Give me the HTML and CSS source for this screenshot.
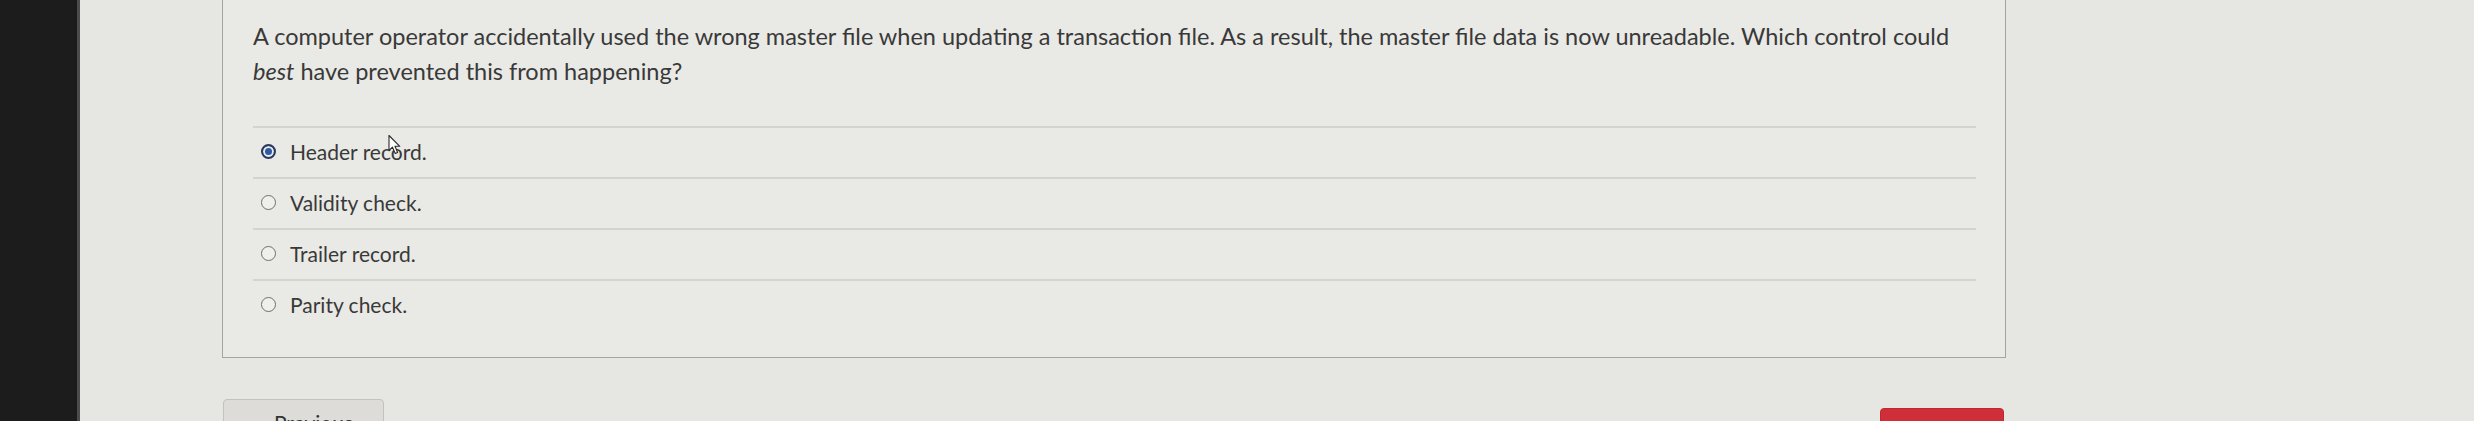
FILE: index.html
```html
<!DOCTYPE html>
<html lang="en">
<head>
  <meta charset="UTF-8">
  <meta name="viewport" content="width=device-width, initial-scale=1.0">
  <title>Quiz Question</title>
  <link rel="stylesheet" href="styles.css">
</head>
<body>

  <div class="screen">
    <aside class="bezel"></aside>

    <main class="content">
      <section class="question-card">
        <p class="question-text">A computer operator accidentally used the wrong master file when updating a transaction file. As a result, the master file data is now unreadable. Which control could <em>best</em> have prevented this from happening?</p>

        <ul class="answers">
          <li class="answer">
            <span class="radio checked"></span>
            <span class="answer-label">Header record.
              <svg class="cursor" viewBox="0 0 13 21" width="13" height="24">
                <path d="M1 1 L1 16 L4.5 12.6 L7.2 19 L9.6 18 L7 11.8 L11.8 11.8 Z" fill="#ffffff" stroke="#2a2a2a" stroke-width="1.1" stroke-linejoin="round"/>
              </svg>
            </span>
          </li>
          <li class="answer">
            <span class="radio"></span>
            <span class="answer-label">Validity check.</span>
          </li>
          <li class="answer">
            <span class="radio"></span>
            <span class="answer-label">Trailer record.</span>
          </li>
          <li class="answer">
            <span class="radio"></span>
            <span class="answer-label">Parity check.</span>
          </li>
        </ul>
      </section>

      <div class="quiz-nav">
        <button class="btn btn-prev">Previous</button>
        <button class="btn btn-next">Next</button>
      </div>
    </main>
  </div>

</body>
</html>
```

FILE: styles.css
```css
/* General Reset */
body, html {
  margin: 0;
  padding: 0;
  height: 100%;
  overflow: hidden;
  font-family: Lato, "Open Sans", sans-serif;
  background-color: #e6e6e2;
}

ul {
  list-style-type: none;
  margin: 0;
  padding: 0;
}

.screen {
  display: flex;
  height: 421px;
}

/* Dark monitor edge on the left */
.bezel {
  width: 77px;
  flex-shrink: 0;
  background-color: #1c1c1c;
  border-right: 3px solid #4b4b4b;
}

/* Main Content */
.content {
  flex: 1;
  padding-left: 142px;
}

.question-card {
  width: 1784px;
  box-sizing: border-box;
  background-color: #e9e9e5;
  border: 1px solid #a4a4a0;
  border-top: none;
  padding: 19px 29px 27px 30px;
}

.question-text {
  margin: 0;
  font-size: 23.5px;
  line-height: 35px;
  color: #393939;
}

.answers {
  margin-top: 37px;
}

.answer {
  height: 51px;
  box-sizing: border-box;
  border-top: 2px solid #d3d3cf;
  padding-left: 8px;
  padding-bottom: 3px;
  display: flex;
  align-items: center;
  gap: 14px;
  font-size: 21px;
  color: #393939;
}

.answer-label {
  position: relative;
}

.radio {
  width: 15px;
  height: 15px;
  box-sizing: border-box;
  border-radius: 50%;
  border: 1.5px solid #6e6e6e;
  background-color: #efefeb;
  flex-shrink: 0;
}

.radio.checked {
  border: 2px solid #2a3a5e;
  background-color: #2d5aa6;
  box-shadow: inset 0 0 0 2px #e9e9e5;
}

/* mouse pointer sitting over the first answer */
.cursor {
  position: absolute;
  left: 98px;
  top: -6px;
}

/* Bottom navigation */
.quiz-nav {
  width: 1784px;
  display: flex;
  justify-content: space-between;
  align-items: flex-start;
  margin-top: 41px;
}

.btn {
  height: 46px;
  border-radius: 4px;
  font-family: Lato, sans-serif;
  font-size: 21px;
  padding: 0;
}

.btn-prev {
  width: 161px;
  margin-left: 1px;
  padding-left: 20px;
  background-color: #dddcd8;
  border: 1px solid #c2c2be;
  color: #333;
}

.btn-next {
  width: 124px;
  margin-right: 2px;
  margin-top: 9px;
  background-color: #cf2f39;
  border: 1px solid #c22731;
  color: #fff;
}
```
